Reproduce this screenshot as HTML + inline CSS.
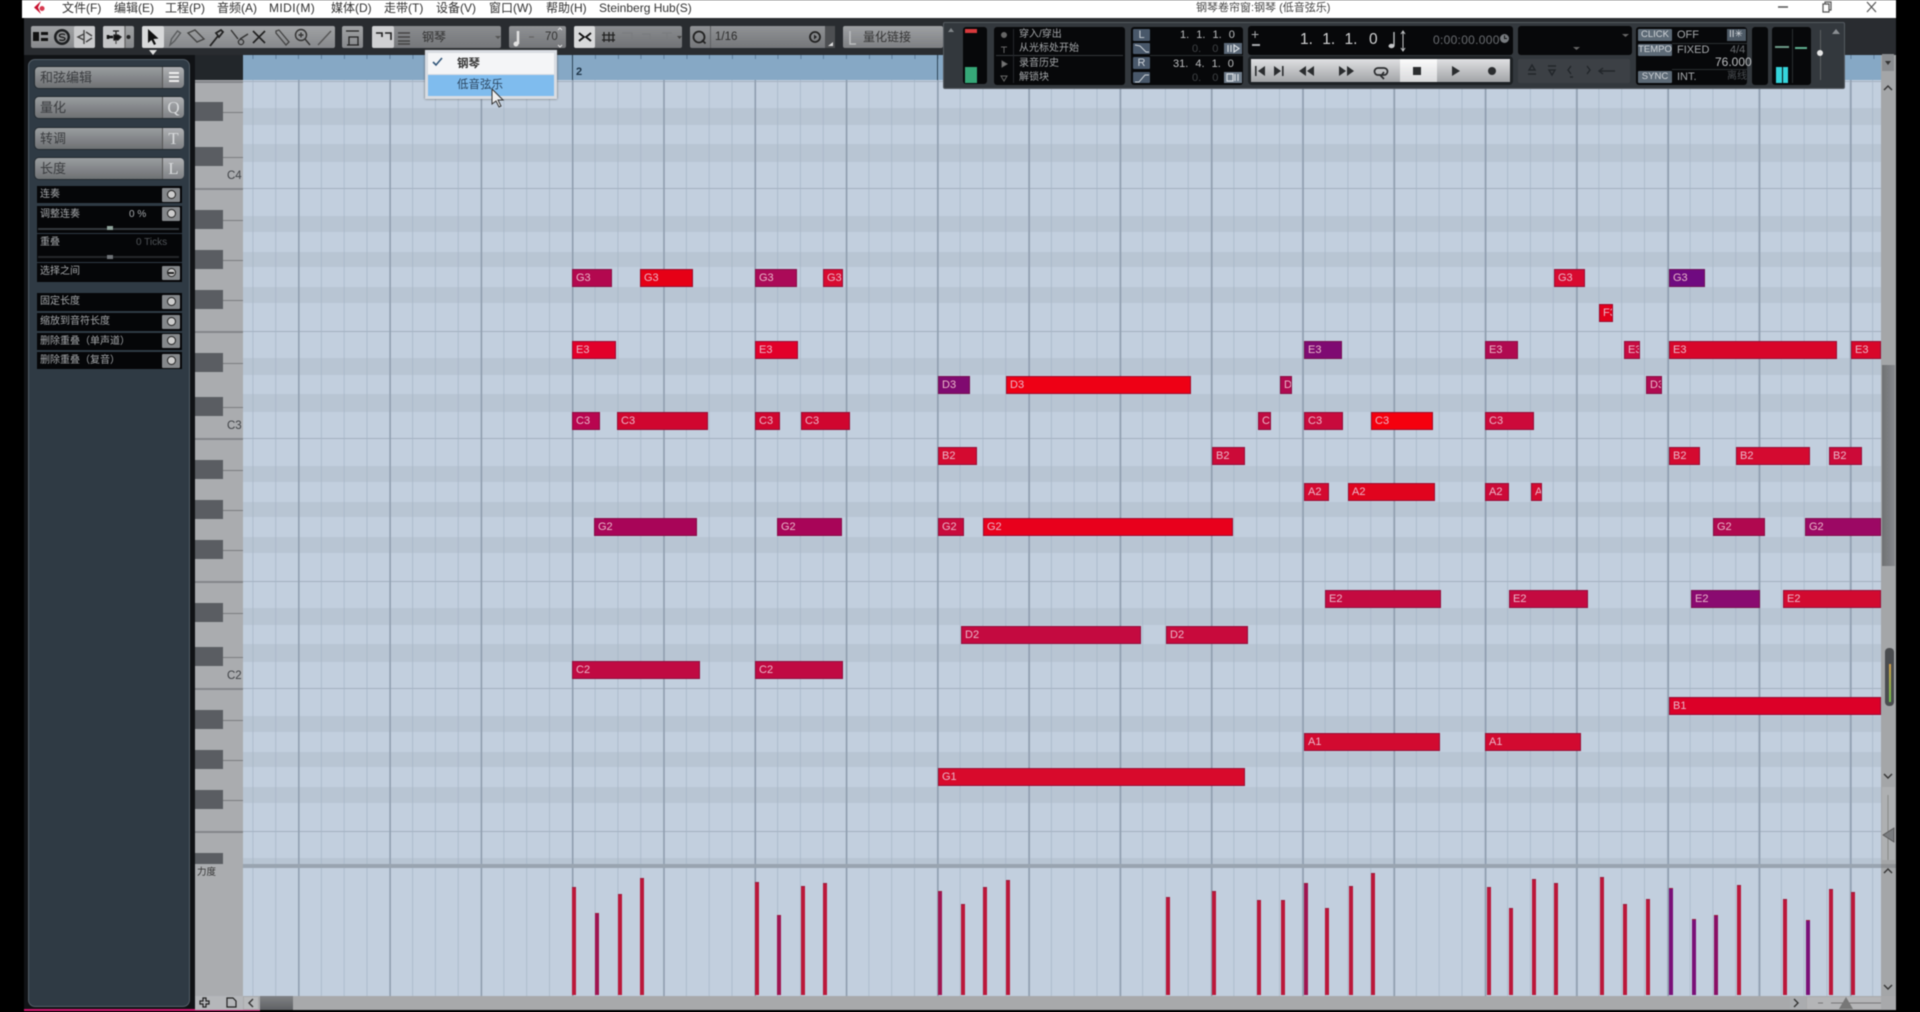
<!DOCTYPE html>
<html><head><meta charset="utf-8"><style>
html,body{margin:0;padding:0;background:#000}
body{width:1920px;height:1012px;overflow:hidden;position:relative;font-family:"Liberation Sans","Noto Sans CJK SC",sans-serif}
#w{position:absolute;left:0;top:0;width:1920px;height:1012px;overflow:hidden;filter:blur(.6px)}
#w div,#w span,#w i,#w svg{position:absolute;display:block}
i{font-style:normal}
.t{white-space:nowrap;line-height:14px}
.m{font-size:12px;color:#333;top:1px}
.g{top:26px;height:22px;background:linear-gradient(#a0a2a4,#87898c);border-radius:2px}
.b{left:243px;width:1638px;background:#b8c5d3}
.h{left:243px;width:1638px;height:1px;background:#a3b0c0}
.k{left:195px;width:28px;height:19px;background:#5a5d62}
.l{left:222px;width:21px;height:1px;background:#7b7d80}
.ll{left:195px;width:48px;height:2px;background:#85878a}
.n{height:18px;box-sizing:border-box;border:1px solid rgba(110,20,60,.6);color:#eab9ca;font:11px/16px "Liberation Sans",sans-serif;padding-left:3px;overflow:hidden;white-space:nowrap;margin-top:1px}
.v{width:3.5px;bottom:17px;background:#bb183a;border-top:1px solid #9a1a3a}
.sb{left:35px;width:148px;height:21px;border-radius:4px;background:linear-gradient(#9a9d9f,#6e7174);color:#3a3c3f;font-size:13px;line-height:21px;text-indent:5px;box-shadow:0 0 0 1px #232a30}
.sk{left:162px;width:21px;height:21px;border-radius:0 4px 4px 0;background:linear-gradient(#aeb0b3,#7e8184);color:#d8dadc;font:17px/21px "Liberation Serif",serif;text-align:center;text-indent:0;border-left:1px solid #555}
.r{left:37px;width:145px;background:#050608;color:#a4a7aa;font-size:10px;line-height:18px;text-indent:3px}
.pb{left:162px;width:18px;height:14px;background:#85888b;border-radius:1px}
.pb:after{content:"";position:absolute;left:5px;top:2px;width:7px;height:7px;border:1px solid #222;border-radius:50%;background:#ccc}
.p{background:#07080a;border-radius:3px}
.x{color:#a4a7aa;font-size:10px}
.y{color:#bcbec0;font-size:11px;word-spacing:4px}
.tb{top:59px;height:23px;background:linear-gradient(#dfe0e2,#a2a4a7);border-right:1px solid #4a4d50}
.cb{left:1638px;width:34px;height:12px;background:#5d6a76;color:#d0d4d8;font-size:9.5px;line-height:12px;text-align:center;border-radius:1px}
.lb{left:1133px;width:17px;height:12px;background:#49586a;color:#c8ced4;font-size:11px;line-height:12px;text-align:center;border-radius:1px}
</style></head><body><div id="w">

<!-- title bar -->
<div style="left:22px;top:0;width:1874px;height:18px;background:#fff"></div>
<svg style="left:30px;top:0" width="20" height="15" viewBox="0 0 20 15"><path d="M11 1 L4 7.5 L11 14 L8 7.5Z" fill="#c8102e"/><path d="M12 6 a2.5 2.5 0 1 0 .1 0Z" fill="#d83a50"/></svg>
<span class="t m" style="left:62px">文件(F)</span><span class="t m" style="left:114px">编辑(E)</span><span class="t m" style="left:165px">工程(P)</span><span class="t m" style="left:217px">音频(A)</span><span class="t m" style="left:269px;letter-spacing:.4px">MIDI(M)</span><span class="t m" style="left:331px">媒体(D)</span><span class="t m" style="left:384px">走带(T)</span><span class="t m" style="left:436px">设备(V)</span><span class="t m" style="left:489px">窗口(W)</span><span class="t m" style="left:546px">帮助(H)</span><span class="t m" style="left:599px">Steinberg Hub(S)</span>
<span class="t" style="left:1196px;top:1px;font-size:11px;color:#444">钢琴卷帘窗:钢琴 (低音弦乐)</span>
<svg style="left:1770px;top:0" width="120" height="16"><path d="M8 7h10" stroke="#555" stroke-width="1.5"/><path d="M53 4h6v8h-6zM55 4V2h6v8h-2" fill="none" stroke="#555" stroke-width="1.2"/><path d="M97 2l9 10M106 2l-9 10" stroke="#555" stroke-width="1.2"/></svg>

<!-- toolbar -->
<div style="left:24px;top:18px;width:1872px;height:37px;background:#292c30"></div>
<div class="g" style="left:31px;width:64px"></div><div class="g" style="left:74px;width:21px;background:#c9cacc"></div>
<div class="g" style="left:103px;width:31px"></div><div class="g" style="left:103px;width:22px;background:#c4c5c7"></div>
<div class="g" style="left:142px;width:193px"></div><div class="g" style="left:142px;width:22px;background:#d8d9da"></div>
<div class="g" style="left:342px;width:21px"></div>
<div class="g" style="left:372px;width:129px;background:linear-gradient(#8a8c8f,#75777a)"></div><div class="g" style="left:372px;width:22px;background:#cfd0d2"></div>
<div class="g" style="left:509px;width:57px;background:linear-gradient(#8f9194,#75777a)"></div>
<div class="g" style="left:574px;width:108px;background:linear-gradient(#8a8c8f,#717376)"></div><div class="g" style="left:574px;width:21px;background:#d8d9da"></div>
<div class="g" style="left:690px;width:145px;background:linear-gradient(#909295,#75777a)"></div><div style="left:710px;top:26px;width:1px;height:22px;background:#5d5f62"></div><div style="left:825px;top:26px;width:10px;height:22px;background:#4d4f52"></div>
<div class="g" style="left:843px;width:100px;background:linear-gradient(#9ea0a3,#7d7f82)"></div>
<svg style="left:0;top:0" width="960" height="60" fill="none" stroke="#222" stroke-width="1.3">
<path d="M33 32h6v9h-6z" fill="#111" stroke="none"/><path d="M41 32h7v3h-7zM41 38h7v3h-7z" fill="#111" stroke="none"/>
<circle cx="62" cy="37" r="8" fill="#1c1e20" stroke="none"/><circle cx="62" cy="37" r="5.5" fill="#8a8c8e" stroke="none"/><path d="M65 34.8c-1-1.1-5.6-1.1-5.6.9s5.6 1 5.6 3-4.6 2.1-5.6.9" stroke="#111" stroke-width="1.2"/>
<path d="M84 30v14M84 34l-6 3 6 3M86 32l6 4M86 42l6-4" stroke="#444" stroke-width="1.4"/>
<path d="M108 37h5M108 35v4" stroke="#111" stroke-width="2.5"/><path d="M113 31h6M116 31v4M114 35h4l3 2-3 3h-4z" fill="#111"/><path d="M116 40v4" stroke="#555"/>
<path d="M125 26v22" stroke="#666"/><circle cx="128.500" cy="37" r="2" fill="#222" stroke="none"/>
<path d="M148 29v14l3.500-3 2.500 5 2-1-2.500-5 5-.5z" fill="#111" stroke="none"/>
<path d="M170 45l1.500-6 6-8 3 2-6 8z" stroke="#5a5c5e" stroke-width="1.4"/>
<path d="M188 33l7-3 9 9-7 3z" stroke="#444" stroke-width="1.4"/>
<path d="M210 46l8-10M216 33l5-3 2 2-4 5z" stroke="#222" stroke-width="1.8"/>
<path d="M231 30l7 9M248 34l-8 5" stroke="#333" stroke-width="1.4"/><circle cx="241" cy="42" r="2.6" stroke="#333"/>
<path d="M253 31l12 12M265 31l-12 12" stroke="#1f1f1f" stroke-width="1.6"/>
<path d="M276 31l3-1 10 12-3 3-10-12z" stroke="#444"/>
<circle cx="301" cy="35" r="5.500" stroke="#333" stroke-width="1.4"/><path d="M305 39l5 6M298.500 35h5M301 32.500v5" stroke="#333" stroke-width="1.4"/>
<path d="M318 45l13-14" stroke="#555" stroke-width="1.4"/>
<path d="M346 31h13M347 45h12M349 45v-8h9v8" stroke="#222"/>
<path d="M376 33h6v4M385 33h6v7" stroke="#222" stroke-width="1.6"/>
<path d="M398 33h12M398 37h12M398 41h12M398 44h12" stroke="#444" stroke-width="1.6"/>
<path d="M495 36h6l-3 3z" fill="#555" stroke="none"/>
<path d="M518 31v13" stroke="#e2e2e2" stroke-width="2.500"/><circle cx="516" cy="44" r="2.500" fill="#e2e2e2" stroke="none"/><path d="M529 37h5" stroke="#666"/>
<path d="M558 30l2-2 2 2M558 45l2 2 2-2" stroke="#e2e2e2" stroke-width="1"/>
<path d="M579 33l5 4-5 4M591 33l-5 4 5 4" stroke="#111" stroke-width="1.800"/>
<path d="M604 32v10M609 32v10M613 32v10M602 35h13M602 40h13" stroke="#222" stroke-width="1.300"/>
<path d="M622 33h10v8h-10M642 34h8v7h-8M662 33h10M667 33v8" stroke="#7a7c7f"/><path d="M677 36h5l-2.500 3z" fill="#444" stroke="none"/>
<circle cx="699" cy="37" r="5.500" stroke="#222" stroke-width="1.800"/><path d="M702 40l3.500 3.500" stroke="#222" stroke-width="1.800"/>
<circle cx="815" cy="37" r="5" stroke="#222" stroke-width="1.800"/><path d="M814 34.500v5l3-2.500z" fill="#222" stroke="none"/>
<path d="M828 46l5-4v4z" fill="#ddd" stroke="none"/>
<path d="M850 31v13h6" stroke="#bbbdbf" stroke-width="1.500"/>
</svg>
<span class="t" style="left:422px;top:30px;font-size:12px;color:#333">钢琴</span>
<span class="t" style="left:545px;top:30px;font-size:11.5px;color:#333">70</span>
<span class="t" style="left:715px;top:30px;font-size:11.5px;color:#2c2c2c">1/16</span>
<span class="t" style="left:863px;top:30px;font-size:12px;color:#333">量化链接</span>
<div style="left:149px;top:50px;width:0;height:0;border:4px solid transparent;border-top:5px solid #ddd"></div>

<!-- left panel -->
<div style="left:24px;top:55px;width:171px;height:955px;background:#101215"></div>
<div style="left:28px;top:59px;width:162px;height:948px;background:#2f3a44;border:1px solid #545e68;box-sizing:border-box;border-radius:7px"></div>
<div class="sb" style="top:67px">和弦编辑</div><div class="sk" style="top:67px"><svg style="left:6px;top:4px" width="10" height="13"><path d="M0 2h10M0 6h10M0 10h10" stroke="#eee" stroke-width="2"/></svg></div>
<div class="sb" style="top:97px">量化</div><div class="sk" style="top:97px">Q</div>
<div class="sb" style="top:128px">转调</div><div class="sk" style="top:128px">T</div>
<div class="sb" style="top:158px">长度</div><div class="sk" style="top:158px">L</div>
<div class="r" style="top:186px;height:17px">连奏</div><div class="pb" style="top:188px"></div>
<div class="r" style="top:206px;height:27px">调整连奏</div><div class="pb" style="top:207px"></div>
<span class="t x" style="left:129px;top:208px">0 %</span>
<div style="left:38px;top:228px;width:141px;height:2px;background:#34383c"></div><div style="left:107px;top:226px;width:6px;height:4px;background:#8fa39b"></div>
<div class="r" style="top:234px;height:28px">重叠</div>
<span class="t x" style="left:136px;top:236px;color:#4e5256">0 Ticks</span>
<div style="left:38px;top:256px;width:141px;height:2px;background:#24272a"></div><div style="left:107px;top:255px;width:6px;height:4px;background:#6f7377"></div>
<div class="r" style="top:263px;height:19px">选择之间</div><div class="pb" style="top:266px;background:#85888b"></div><div style="left:168px;top:272px;width:6px;height:2px;background:#222"></div>
<div class="r" style="top:293px;height:18px">固定长度</div><div class="pb" style="top:295px"></div>
<div class="r" style="top:313px;height:18px">缩放到音符长度</div><div class="pb" style="top:315px"></div>
<div class="r" style="top:333px;height:17px">删除重叠（单声道）</div><div class="pb" style="top:334px"></div>
<div class="r" style="top:352px;height:17px">删除重叠（复音）</div><div class="pb" style="top:354px"></div>
<div style="left:24px;top:1009px;width:236px;height:2px;background:#d0186e"></div>

<!-- piano -->
<div style="left:195px;top:55px;width:48px;height:25px;background:#22262a"></div>
<div style="left:195px;top:80px;width:48px;height:917px;background:#aaacaf"></div>
<div style="left:195px;top:996px;width:48px;height:14px;background:#b5b7ba"></div>
<div class="ll" style="top:81px"></div><div class="ll" style="top:188px"></div><div class="ll" style="top:331px"></div><div class="ll" style="top:438px"></div><div class="ll" style="top:581px"></div><div class="ll" style="top:688px"></div><div class="ll" style="top:831px"></div>
<div class="l" style="top:112px"></div><div class="l" style="top:157px"></div><div class="l" style="top:220px"></div><div class="l" style="top:260px"></div><div class="l" style="top:300px"></div><div class="l" style="top:363px"></div><div class="l" style="top:407px"></div><div class="l" style="top:470px"></div><div class="l" style="top:510px"></div><div class="l" style="top:550px"></div><div class="l" style="top:613px"></div><div class="l" style="top:657px"></div><div class="l" style="top:720px"></div><div class="l" style="top:760px"></div><div class="l" style="top:800px"></div>
<div class="k" style="top:102px"></div><div class="k" style="top:147px"></div><div class="k" style="top:210px"></div><div class="k" style="top:250px"></div><div class="k" style="top:290px"></div><div class="k" style="top:353px"></div><div class="k" style="top:397px"></div><div class="k" style="top:460px"></div><div class="k" style="top:500px"></div><div class="k" style="top:540px"></div><div class="k" style="top:603px"></div><div class="k" style="top:647px"></div><div class="k" style="top:710px"></div><div class="k" style="top:750px"></div><div class="k" style="top:790px"></div><div class="k" style="top:853px;height:11px"></div>
<span class="t" style="left:227px;top:169px;font-size:11.500px;color:#404347">C4</span><span class="t" style="left:227px;top:419px;font-size:11.500px;color:#404347">C3</span><span class="t" style="left:227px;top:669px;font-size:11.500px;color:#404347">C2</span>
<span class="t" style="left:197px;top:866px;font-size:9.5px;color:#333">力度</span>
<svg style="left:196px;top:995px" width="47" height="15" fill="none" stroke="#222" stroke-width="1.2"><path d="M7 3h3v3h3v3h-3v3H7V9H4V6h3z"/><path d="M31 3h6l3 3v6H31z"/></svg>

<!-- ruler -->
<div style="left:243px;top:55px;width:1638px;height:25px;background:#86a8c5"></div>
<div style="left:243px;top:55px;width:1638px;height:4px;background:repeating-linear-gradient(90deg,#5f7f9c 0 1px,transparent 1px 22.83px);background-position:9.45px 0"></div>
<div style="left:572px;top:55px;width:1px;height:25px;background:#2d4558"></div>
<span class="t" style="left:576px;top:65px;font:bold 11px/14px 'Liberation Sans',sans-serif;color:#1d3346">2</span>
<div style="left:937px;top:55px;width:1px;height:25px;background:#2d4558"></div>

<!-- grid -->
<div id="grid" style="left:243px;top:80px;width:1638px;height:784px;background:#c2cfde"></div>
<div class="b" style="top:108px;height:17px"></div><div class="b" style="top:144px;height:18px"></div>
<div class="b" style="top:216px;height:16px"></div><div class="b" style="top:252px;height:15px"></div><div class="b" style="top:287px;height:16px"></div><div class="b" style="top:358px;height:17px"></div><div class="b" style="top:394px;height:18px"></div>
<div class="b" style="top:466px;height:16px"></div><div class="b" style="top:502px;height:15px"></div><div class="b" style="top:537px;height:16px"></div><div class="b" style="top:608px;height:17px"></div><div class="b" style="top:644px;height:18px"></div>
<div class="b" style="top:716px;height:16px"></div><div class="b" style="top:752px;height:15px"></div><div class="b" style="top:787px;height:16px"></div><div class="b" style="top:858px;height:6px"></div>
<div class="h" style="top:81px"></div><div class="h" style="top:188px"></div><div class="h" style="top:331px"></div><div class="h" style="top:438px"></div><div class="h" style="top:581px"></div><div class="h" style="top:688px"></div><div class="h" style="top:831px"></div>
<!-- velocity lane -->
<div style="left:243px;top:868px;width:1638px;height:128px;background:#c2cfde"></div>
<!-- vertical lines -->
<div style="left:243px;top:80px;width:1638px;height:916px;background-image:linear-gradient(90deg,#8f9dae 1.4px,transparent 1.4px),linear-gradient(90deg,rgba(165,180,197,.7) 1px,transparent 1px);background-size:91.3px 100%,22.825px 100%;background-position:55.1px 0,9.45px 0"></div>
<div style="left:243px;top:864px;width:1638px;height:4px;background:#99a4b0"></div>

<!-- notes -->
<i class="n" style="top:268px;left:572px;width:40px;background:#b3084f">G3</i><i class="n" style="top:268px;left:640px;width:53px;background:#e60016">G3</i><i class="n" style="top:268px;left:755px;width:42px;background:#ab0a58">G3</i><i class="n" style="top:268px;left:823px;width:20px;background:#d80a30">G3</i><i class="n" style="top:268px;left:1554px;width:31px;background:#d80a30">G3</i><i class="n" style="top:268px;left:1669px;width:36px;background:#6f0a80">G3</i>
<i class="n" style="top:303px;left:1599px;width:14px;background:#e3001c">F3</i>
<i class="n" style="top:340px;left:572px;width:44px;background:#e2002a">E3</i><i class="n" style="top:340px;left:755px;width:43px;background:#e2002a">E3</i><i class="n" style="top:340px;left:1304px;width:38px;background:#7f0a72">E3</i><i class="n" style="top:340px;left:1485px;width:33px;background:#b00a50">E3</i><i class="n" style="top:340px;left:1624px;width:16px;background:#c80a40">E3</i><i class="n" style="top:340px;left:1669px;width:168px;background:#d8062a">E3</i><i class="n" style="top:340px;left:1851px;width:30px;background:#d8062a">E3</i>
<i class="n" style="top:375px;left:938px;width:32px;background:#800a70">D3</i><i class="n" style="top:375px;left:1006px;width:185px;background:#ee0015">D3</i><i class="n" style="top:375px;left:1280px;width:12px;background:#b00a50">D</i><i class="n" style="top:375px;left:1646px;width:16px;background:#b00a50">D3</i>
<i class="n" style="top:411px;left:572px;width:28px;background:#b8054f">C3</i><i class="n" style="top:411px;left:617px;width:91px;background:#d0062f">C3</i><i class="n" style="top:411px;left:755px;width:25px;background:#d0062f">C3</i><i class="n" style="top:411px;left:801px;width:49px;background:#d0062f">C3</i><i class="n" style="top:411px;left:1258px;width:13px;background:#c00a40">C</i><i class="n" style="top:411px;left:1304px;width:39px;background:#c80a3c">C3</i><i class="n" style="top:411px;left:1371px;width:62px;background:#f5000e">C3</i><i class="n" style="top:411px;left:1485px;width:49px;background:#cc0a3a">C3</i>
<i class="n" style="top:446px;left:938px;width:39px;background:#d40a30">B2</i><i class="n" style="top:446px;left:1212px;width:33px;background:#cc0a38">B2</i><i class="n" style="top:446px;left:1669px;width:31px;background:#d40a30">B2</i><i class="n" style="top:446px;left:1736px;width:74px;background:#d40a30">B2</i><i class="n" style="top:446px;left:1829px;width:33px;background:#cc0a38">B2</i>
<i class="n" style="top:482px;left:1304px;width:25px;background:#d40a30">A2</i><i class="n" style="top:482px;left:1348px;width:87px;background:#e0041e">A2</i><i class="n" style="top:482px;left:1485px;width:24px;background:#cc0a38">A2</i><i class="n" style="top:482px;left:1531px;width:11px;background:#d40a30">A</i>
<i class="n" style="top:517px;left:594px;width:103px;background:#a80558">G2</i><i class="n" style="top:517px;left:777px;width:65px;background:#a80558">G2</i><i class="n" style="top:517px;left:938px;width:26px;background:#c80a3c">G2</i><i class="n" style="top:517px;left:983px;width:250px;background:#e8001c">G2</i><i class="n" style="top:517px;left:1713px;width:52px;background:#b0084f">G2</i><i class="n" style="top:517px;left:1805px;width:76px;background:#9c0864">G2</i>
<i class="n" style="top:589px;left:1325px;width:116px;background:#c40a40">E2</i><i class="n" style="top:589px;left:1509px;width:79px;background:#c40a40">E2</i><i class="n" style="top:589px;left:1691px;width:69px;background:#8a0a70">E2</i><i class="n" style="top:589px;left:1783px;width:98px;background:#d20a30">E2</i>
<i class="n" style="top:625px;left:961px;width:180px;background:#c40a40">D2</i><i class="n" style="top:625px;left:1166px;width:82px;background:#c80a3c">D2</i>
<i class="n" style="top:660px;left:572px;width:128px;background:#c00a42">C2</i><i class="n" style="top:660px;left:755px;width:88px;background:#c00a42">C2</i>
<i class="n" style="top:696px;left:1669px;width:212px;background:#dc0028">B1</i>
<i class="n" style="top:732px;left:1304px;width:136px;background:#d20a30">A1</i><i class="n" style="top:732px;left:1485px;width:96px;background:#d20a30">A1</i>
<i class="n" style="top:767px;left:938px;width:307px;background:#d80a2c">G1</i>

<!-- velocity bars -->
<div class="v" style="left:572px;top:887px"></div><div class="v" style="left:595px;top:913px;background:#a01550"></div><div class="v" style="left:618px;top:894px"></div><div class="v" style="left:640px;top:878px"></div><div class="v" style="left:755px;top:882px"></div><div class="v" style="left:777px;top:915px;background:#a01550"></div><div class="v" style="left:801px;top:886px"></div><div class="v" style="left:823px;top:883px"></div><div class="v" style="left:938px;top:891px;background:#a01550"></div><div class="v" style="left:961px;top:904px"></div><div class="v" style="left:983px;top:887px"></div><div class="v" style="left:1006px;top:880px"></div><div class="v" style="left:1166px;top:897px"></div><div class="v" style="left:1212px;top:891px"></div><div class="v" style="left:1257px;top:900px"></div><div class="v" style="left:1281px;top:900px"></div><div class="v" style="left:1304px;top:883px;background:#a01550"></div><div class="v" style="left:1325px;top:908px"></div><div class="v" style="left:1349px;top:886px"></div><div class="v" style="left:1371px;top:873px"></div><div class="v" style="left:1487px;top:887px"></div><div class="v" style="left:1509px;top:908px"></div><div class="v" style="left:1532px;top:879px"></div><div class="v" style="left:1554px;top:883px"></div><div class="v" style="left:1600px;top:877px"></div><div class="v" style="left:1623px;top:904px"></div><div class="v" style="left:1646px;top:899px"></div><div class="v" style="left:1669px;top:888px;background:#7a1078"></div><div class="v" style="left:1692px;top:919px;background:#7a1078"></div><div class="v" style="left:1714px;top:915px;background:#8a1065"></div><div class="v" style="left:1737px;top:885px"></div><div class="v" style="left:1783px;top:899px"></div><div class="v" style="left:1806px;top:920px;background:#7a1078"></div><div class="v" style="left:1829px;top:889px"></div><div class="v" style="left:1851px;top:892px"></div>

<!-- bottom scrollbar -->
<div style="left:243px;top:996px;width:1653px;height:14px;background:#a8a9ab"></div>
<div style="left:244px;top:997px;width:14px;height:12px;background:#b8babc"></div>
<div style="left:260px;top:996px;width:33px;height:14px;background:linear-gradient(#808285,#5f6164)"></div>
<div style="left:1790px;top:997px;width:16px;height:12px;background:#aaacaf"></div>
<div style="left:1807px;top:997px;width:74px;height:12px;background:#b4b5b7"></div>
<svg style="left:243px;top:996px" width="1640" height="14" fill="none" stroke="#333" stroke-width="1.4"><path d="M10 3l-4 4 4 4"/><path d="M1551 3l4 4-4 4"/><path d="M1575 7h5M1588 7h50" stroke="#777" stroke-width="1"/><path d="M1603 1l-7 12h14z" fill="#777" stroke="none"/></svg>

<!-- right scrollbar -->
<div style="left:1881px;top:55px;width:15px;height:941px;background:#a4a6a8"></div>
<div style="left:1882px;top:82px;width:13px;height:283px;background:#a4a6a8"></div>
<div style="left:1882px;top:365px;width:13px;height:201px;background:linear-gradient(90deg,#6f7174,#87898c)"></div>
<div style="left:1885px;top:648px;width:9px;height:58px;background:#4a4c4f;border-radius:4px"></div>
<div style="left:1889px;top:664px;width:2px;height:38px;background:linear-gradient(#d5a04a,#6fc24a)"></div>
<div style="left:1882px;top:787px;width:13px;height:73px;background:#aeb0b2"></div>
<div style="left:1881px;top:864px;width:15px;height:4px;background:#8f9194"></div>
<svg style="left:1881px;top:60px" width="15" height="945" fill="none" stroke="#333" stroke-width="1.4"><path d="M3 30l4-4 4 4"/><path d="M3 714l4 4 4-4"/><path d="M3 813l4-4 4 4"/><path d="M3 925l4 4 4-4"/><path d="M7 735v65" stroke="#888" stroke-width="1"/><path d="M2 775l11-7v14z" fill="#7a7c7f" stroke="#555" stroke-width=".8"/><path d="M6 3h5l-2.5 4z" fill="#555" stroke="none"/></svg>

<!-- transport -->
<div style="left:943px;top:22px;width:902px;height:67px;background:#33383d;border:1px solid #555a60;box-sizing:border-box;border-radius:2px"></div>
<svg style="left:946px;top:26px" width="10" height="10"><path d="M5 2l3 4H2z" fill="#7f8488"/></svg>
<div class="p" style="left:963px;top:27px;width:24px;height:57px"></div><div style="left:965px;top:29px;width:12px;height:4px;background:#d8393c"></div><div style="left:965px;top:67px;width:12px;height:16px;background:#36a878"></div>
<div class="p" style="left:994px;top:27px;width:131px;height:58px"></div>
<div style="left:996px;top:55px;width:127px;height:1px;background:#34373a"></div><div style="left:1013px;top:29px;width:1px;height:54px;background:#24272a"></div>
<span class="t x" style="left:1019px;top:28px">穿入/穿出</span><span class="t x" style="left:1019px;top:42px">从光标处开始</span><span class="t x" style="left:1019px;top:57px">录音历史</span><span class="t x" style="left:1019px;top:71px">解锁块</span>
<svg style="left:998px;top:28px" width="14" height="58" fill="none" stroke="#666"><circle cx="6" cy="7" r="2.5" fill="#666"/><path d="M3 19h6M6 19v6"/><path d="M4 33l5 3-5 3z" fill="#777"/><path d="M3 48h6l-3 5z"/></svg>
<div class="p" style="left:1131px;top:27px;width:112px;height:58px"></div>
<div class="lb" style="top:29px">L</div><div class="lb" style="top:43px;height:11px"></div><div class="lb" style="top:57px">R</div><div class="lb" style="top:72px;height:11px"></div>
<svg style="left:1133px;top:43px" width="17" height="42" fill="none" stroke="#c8ced4"><path d="M2 2l5 1 6 6h3"/><path d="M2 39h4l6-7h4"/></svg>
<div style="left:1150px;top:55px;width:93px;height:1px;background:#2a2d30"></div>
<span class="t y" style="left:1180px;top:28px">1. 1. 1. 0</span>
<span class="t" style="left:1192px;top:42px;font-size:11px;color:#3f4245;word-spacing:8px">0. 0</span>
<span class="t y" style="left:1173px;top:57px">31. 4. 1. 0</span>
<span class="t" style="left:1192px;top:71px;font-size:11px;color:#3f4245;word-spacing:8px">0. 0</span>
<div style="left:1224px;top:43px;width:18px;height:11px;background:#5a6776"></div><div style="left:1224px;top:72px;width:18px;height:11px;background:#6f7c8a"></div>
<svg style="left:1224px;top:43px" width="18" height="41" fill="none" stroke="#d8dde2" stroke-width="1.200"><path d="M4 2v7M7 2v7M10 2v7l5-3.500z"/><path d="M3 31h6v7H3zM11 31v7M14 31v7"/></svg>
<div class="p" style="left:1248px;top:26px;width:265px;height:29px"></div>
<span class="t" style="left:1300px;top:33px;font-size:15.500px;color:#cfd0d1;word-spacing:5px">1. 1. 1.</span>
<span class="t" style="left:1369px;top:33px;font-size:15.500px;color:#cfd0d1">0</span>
<svg style="left:1384px;top:29px" width="24" height="24" fill="none" stroke="#c4c6c8"><path d="M10 3v14" stroke-width="1.300"/><ellipse cx="7.500" cy="17" rx="3" ry="2.200" fill="#c4c6c8" stroke="none"/><path d="M19 2v20M17 5l2-3 2 3M17 19l2 3 2-3" stroke-width="1"/></svg>
<span class="t" style="left:1433px;top:33px;font-size:12px;color:#696c70;letter-spacing:.3px">0:00:00.000</span>
<span class="t" style="left:1251px;top:27px;font-size:14px;color:#a8aaad">+</span><div style="left:1252px;top:44px;width:8px;height:1.500px;background:#a8aaad"></div>
<svg style="left:1499px;top:33px" width="11" height="11"><circle cx="5.500" cy="5.500" r="4.500" fill="#767a7e"/><path d="M5.500 2.500v3h2.500" stroke="#111" fill="none"/></svg>
<div style="left:1248px;top:56px;width:265px;height:29px;background:#1d2124;border-radius:4px"></div>
<div class="tb" style="left:1251px;width:19px"></div><div class="tb" style="left:1270px;width:19px"></div><div class="tb" style="left:1289px;width:37px"></div><div class="tb" style="left:1326px;width:37px"></div><div class="tb" style="left:1363px;width:37px"></div><div class="tb" style="left:1400px;width:37px;background:linear-gradient(#fbfbfb,#d8d9db)"></div><div class="tb" style="left:1437px;width:37px"></div><div class="tb" style="left:1474px;width:36px;border-right:0"></div>
<svg style="left:1248px;top:59px" width="264" height="24"><g fill="#2a2c2e"><path d="M7 7h1.600v10H7zM17 7l-7 5 7 5z"/><path d="M26 7l7 5-7 5zM34 7h1.600v10H34z"/><path d="M58 7l-7 5 7 5zM66 7l-7 5 7 5z"/><path d="M91 7l7 5-7 5zM99 7l7 5-7 5z"/><path d="M165 8h8v8h-8z"/><path d="M204 7l8 5-8 5z"/><circle cx="244" cy="12" r="4"/></g><path d="M130 9h6a3.500 3.500 0 1 1 0 7h-6a3.500 3.500 0 0 1 0-7zM136 13l-3 4 3 3" fill="none" stroke="#2a2c2e" stroke-width="1.700"/></svg>
<div class="p" style="left:1518px;top:26px;width:114px;height:29px"></div>
<svg style="left:1570px;top:30px" width="64" height="24"><path d="M52 4h7l-3.500 3z" fill="#666"/><path d="M3 17h7l-3.500 3z" fill="#666"/></svg>
<div style="left:1518px;top:59px;width:112px;height:24px;background:#3c4045;border-radius:2px"></div>
<svg style="left:1525px;top:62px" width="100" height="18" fill="none" stroke="#22262a" stroke-width="1.4"><path d="M7 3l-3 5h6zM3 12h8M24 8l3 5 3-5zM23 4h8M46 4l-3 4 3 4M45 15h3M62 4l3 4-3 4M74 9h16M78 6l-4 3 4 3"/></svg>
<div class="p" style="left:1636px;top:27px;width:111px;height:58px"></div>
<div class="cb" style="top:29px">CLICK</div><div class="cb" style="top:44px">TEMPO</div><div class="cb" style="top:71px">SYNC</div>
<div style="left:1672px;top:43px;width:75px;height:1px;background:#2a2d30"></div><div style="left:1672px;top:69px;width:75px;height:1px;background:#2a2d30"></div>
<span class="t x" style="left:1677px;top:28px;font-size:11px">OFF</span><span class="t x" style="left:1677px;top:43px;font-size:11px">FIXED</span><span class="t x" style="left:1677px;top:70px;font-size:11px">INT.</span>
<span class="t x" style="left:1730px;top:43px;color:#696c70;font-size:11px">4/4</span><span class="t" style="left:1715px;top:55px;font-size:12px;color:#bcbec0">76.000</span>
<span class="t x" style="left:1727px;top:70px;color:#4a4e52">离线</span>
<div style="left:1727px;top:29px;width:19px;height:12px;background:#4e5a66"></div><span class="t" style="left:1729px;top:28px;font-size:10px;color:#d6dade">II✳</span>
<div class="p" style="left:1752px;top:27px;width:16px;height:58px"></div>
<div class="p" style="left:1772px;top:27px;width:39px;height:58px"></div>
<div style="left:1776px;top:67px;width:6px;height:16px;background:#35d5dc"></div><div style="left:1783px;top:67px;width:5px;height:16px;background:#35d5dc"></div>
<div style="left:1792px;top:29px;width:1px;height:54px;background:#2a2d30"></div>
<div style="left:1775px;top:46px;width:14px;height:1.500px;background:#6e9a88"></div><div style="left:1795px;top:47px;width:12px;height:1.500px;background:#5fb090"></div>
<div style="left:1820px;top:30px;width:1px;height:50px;background:#5a5d60"></div><div style="left:1817px;top:50px;width:6px;height:6px;border-radius:50%;background:#e6e6e6"></div>
<svg style="left:1831px;top:28px" width="10" height="8"><path d="M5 1l4 5H1z" fill="#8a8e92"/></svg>
<div style="left:1882px;top:54px;width:12px;height:17px;background:#8a8d90"></div><div style="left:1885px;top:61px;width:0;height:0;border:3px solid transparent;border-top:4px solid #333"></div>

<!-- dropdown -->
<div style="left:425px;top:50px;width:132px;height:49px;background:#d8dce2;box-shadow:0 0 2px #555"></div>
<div style="left:428px;top:53px;width:126px;height:21px;background:#f4f5f7"></div>
<div style="left:428px;top:75px;width:126px;height:21px;background:#7fbcee"></div>
<svg style="left:432px;top:56px" width="12" height="12" fill="none" stroke="#33577a" stroke-width="1.6"><path d="M1 6l3 3 6-7"/></svg>
<span class="t" style="left:457px;top:57px;font-size:11.5px;font-weight:bold;color:#333">钢琴</span>
<span class="t" style="left:457px;top:78px;font-size:11.5px;color:#2c4660">低音弦乐</span>
<svg style="left:491px;top:88px" width="14" height="20"><path d="M1 1v15l4-3 3 6 2-1-3-6h5z" fill="#eee" stroke="#333"/></svg>
</div></body></html>
